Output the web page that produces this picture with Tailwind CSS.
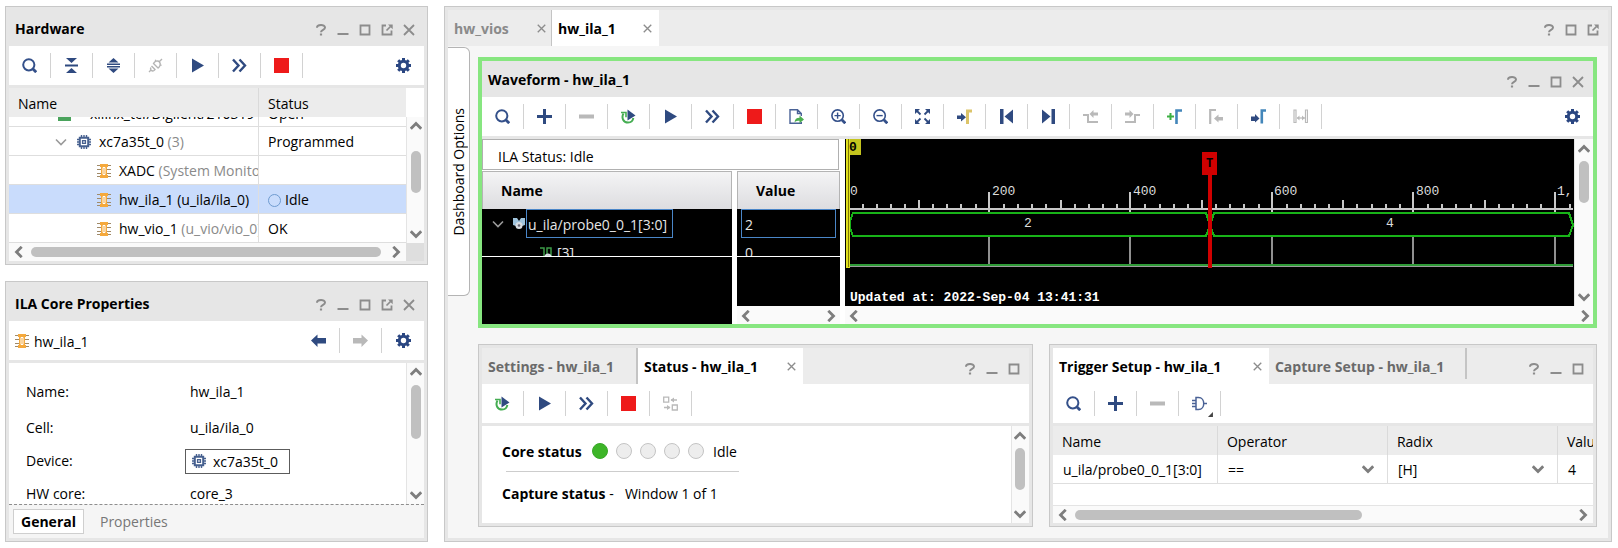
<!DOCTYPE html>
<html lang="en">
<head>
<meta charset="utf-8">
<title>Hardware Manager</title>
<script src="https://cdn.jsdelivr.net/npm/@tailwindcss/browser@4"></script>
</head>
<body class="h-screen min-h-[548px] bg-white font-['Open_Sans','Noto_Sans',sans-serif] text-sm text-black">

<!-- Icon library -->
<svg class="hidden" aria-hidden="true">
  <symbol id="search" viewBox="0 0 15 15"><circle cx="6.8" cy="6.8" r="5.6" fill="none" stroke="#34508a" stroke-width="2"/><path d="M10.5 10.5l3.7 3.7" stroke="#34508a" stroke-width="2.8"/></symbol>
  <symbol id="collapse" viewBox="0 0 15 15"><path d="M2 0h11L7.500 5zM2 15h11L7.500 10zM1 6.500h13v2H1z" fill="#2f4a80"/></symbol>
  <symbol id="expand" viewBox="0 0 15 15"><path d="M2.500 4.500L7.500 0l5 4.500zM2.500 10.500L7.500 15l5-4.500zM1 5.500h13v1.500H1zM1 8h13v1.500H1z" fill="#2f4a80"/></symbol>
  <symbol id="plug" viewBox="0 0 15 15"><path d="M1 14l2.500-2.500M11.500 3.500L14 1M3 9.500c-1.500 2 1 4.500 3 3l1.500-1.500M5.500 5.500l4.500 4.500c2-1 3-4 1.500-6s-5-.8-6 1.500zM3.500 8l3.800 3.800M8 3.500L7.300 1.700M12 6.500l1.500 1" fill="none" stroke="#b4b4b4" stroke-width="1.400"/></symbol>
  <symbol id="play" viewBox="0 0 15 15"><path d="M2 0.500L14 7.500 2 14.500z" fill="#2f4a80"/></symbol>
  <symbol id="ffwd" viewBox="0 0 15 15"><path d="M1 1.500l5.500 6-5.500 6M7.500 1.500l5.500 6-5.500 6" fill="none" stroke="#2f4a80" stroke-width="2.400"/></symbol>
  <symbol id="stop" viewBox="0 0 15 15"><path d="M0 0h15v15H0z" fill="#ee1a1a"/></symbol>
  <symbol id="gear" viewBox="0 0 15 15"><path fill="none" stroke="#2b4782" stroke-width="3" d="M7.500 0v3M7.500 12v3M0 7.500h3M12 7.500h3M2.200 2.200l2.100 2.100M10.700 10.700l2.100 2.100M12.800 2.200l-2.100 2.100M4.300 10.700l-2.100 2.100"/><circle cx="7.500" cy="7.500" r="4.200" fill="none" stroke="#2b4782" stroke-width="3"/></symbol>
  <symbol id="plus" viewBox="0 0 15 15"><path d="M6 0h3v6h6v3H9v6H6V9H0V6h6z" fill="#2f4a80"/></symbol>
  <symbol id="minus" viewBox="0 0 15 15"><path d="M0 5.500h15v4H0z" fill="#b9b9b9"/></symbol>
  <symbol id="rerun" viewBox="0 0 15 15"><path d="M2.500 4.500C0 9 2.500 13.500 7 13.500c3.200 0 5-2 5.300-4.500" fill="none" stroke="#45ad52" stroke-width="2"/><path d="M0 3.500h5v4.700" fill="none" stroke="#45ad52" stroke-width="1.600"/><path d="M6.500 0.500l8 6-8 5z" fill="#2f4a80"/></symbol>
  <symbol id="export" viewBox="0 0 15 15"><path d="M12.300 7V4.500L8.500.7H1v13.500h11.300V13M8.500.7v3.800h3.800" fill="none" stroke="#4a6296" stroke-width="1.400"/><path d="M5.500 13.500c.4-3.500 2-4.800 5-4.800V6.500l4.500 4-4.500 3.800v-2.500c-2.200 0-3.500.3-5 1.700z" fill="#4cae4f"/></symbol>
  <symbol id="zoomin" viewBox="0 0 15 15"><circle cx="6.600" cy="6.600" r="5.700" fill="none" stroke="#34508a" stroke-width="1.600"/><path d="M3.500 6.600h6.200M6.600 3.500v6.200" stroke="#34508a" stroke-width="1.400"/><path d="M10.800 10.800l3.500 3.500" stroke="#34508a" stroke-width="2.800"/></symbol>
  <symbol id="zoomout" viewBox="0 0 15 15"><circle cx="6.600" cy="6.600" r="5.700" fill="none" stroke="#34508a" stroke-width="1.600"/><path d="M3.500 6.600h6.200" stroke="#34508a" stroke-width="1.400"/><path d="M10.800 10.800l3.500 3.500" stroke="#34508a" stroke-width="2.800"/></symbol>
  <symbol id="fit" viewBox="0 0 15 15"><path d="M0 0h5L0 5zM15 0h-5l5 5zM0 15h5l-5-5zM15 15h-5l5-5z" fill="#2f4a80"/><path d="M1.500 1.500l4 4M13.500 1.500l-4 4M1.500 13.500l4-4M13.500 13.500l-4-4" stroke="#2f4a80" stroke-width="1.800"/></symbol>
  <symbol id="gotocursor" viewBox="0 0 15 15"><path d="M10.500 15V2H15" fill="none" stroke="#dcc469" stroke-width="3"/><path d="M0 6.500h4V4l5 4.200-5 4.200V10H0z" fill="#2f4a80"/></symbol>
  <symbol id="first" viewBox="0 0 15 15"><path d="M1 0h3.500v15H1zM14 0.500v14L5.500 7.500z" fill="#2f4a80"/></symbol>
  <symbol id="last" viewBox="0 0 15 15"><path d="M10.500 0H14v15h-3.500zM1 0.500v14l8.500-7z" fill="#2f4a80"/></symbol>
  <symbol id="prevedge" viewBox="0 0 15 15"><path d="M0 6h5v7h10" fill="none" stroke="#b9b9b9" stroke-width="2"/><path d="M6.500 5l4-4v2.500H15v3h-4.500V9z" fill="#b9b9b9"/></symbol>
  <symbol id="nextedge" viewBox="0 0 15 15"><path d="M0 13h10V6h5" fill="none" stroke="#b9b9b9" stroke-width="2"/><path d="M8.500 5l-4-4v2.500H0v3h4.500V9z" fill="#b9b9b9"/></symbol>
  <symbol id="addmark" viewBox="0 0 15 15"><path d="M9.500 15V1.500H15" fill="none" stroke="#4386ba" stroke-width="2.600"/><path d="M0 7.500h7M3.500 4v7" stroke="#3cb043" stroke-width="2"/></symbol>
  <symbol id="prevmark" viewBox="0 0 15 15"><path d="M1.200 15V1H7" fill="none" stroke="#b9b9b9" stroke-width="2.200"/><path d="M5 9.500L9.500 5.500V8H14v3.500H9.500v2z" fill="#b9b9b9"/></symbol>
  <symbol id="nextmark" viewBox="0 0 15 15"><path d="M10.800 14.500V1.500H15" fill="none" stroke="#4386ba" stroke-width="2.600"/><path d="M0 7.500h4V5l4.500 4.500-4.500 4V12H0z" fill="#2f4a80"/></symbol>
  <symbol id="swap" viewBox="0 0 15 15"><path d="M1 1h2v12.500H1zM12.500 1h2v12.500h-2z" fill="none" stroke="#b9b9b9" stroke-width="1.200"/><path d="M4 9h8" stroke="#b9b9b9" stroke-width="1.200"/><path d="M3.800 9l2.700-2.500v5zM11.700 9L9 6.500v5z" fill="#b9b9b9"/></symbol>
  <symbol id="exchange" viewBox="0 0 15 15"><path d="M.7 1.200h5v5h-5zM9.300 9h5v5h-5z" fill="none" stroke="#b9b9b9" stroke-width="1.300"/><path d="M8 4h6M1 11.500h6" stroke="#b9b9b9" stroke-width="1.300"/><path d="M7.500 4L11 1.500v5zM7.500 11.500L4 9v5z" fill="#b9b9b9"/></symbol>
  <symbol id="gate" viewBox="0 0 15 15"><path d="M4 1.500h2.500c7 0 7 12 0 12H4zM0 4.500h4M0 7.500h4M0 10.500h4M11.700 7.500H15" fill="none" stroke="#4a6296" stroke-width="1.500"/></symbol>
  <symbol id="back" viewBox="0 0 15 15"><path d="M0 7.500L6.500 1.500V5H15v5.500H6.500V14z" fill="#2f4a80"/></symbol>
  <symbol id="forward" viewBox="0 0 15 15"><path d="M15 7.500L8.500 1.500V5H0v5.500h8.500V14z" fill="#b9b9b9"/></symbol>
  <symbol id="help" viewBox="0 0 12 12"><path d="M2 3.700C2 .2 10 .2 10 3.600 10 6 6 5.700 6 8.300" fill="none" stroke="#8c8c8c" stroke-width="2"/><path d="M4.900 9.500h2.200v2H4.900z" fill="#8c8c8c"/></symbol>
  <symbol id="min" viewBox="0 0 12 12"><path d="M.5 9h11v2H.5z" fill="#8c8c8c"/></symbol>
  <symbol id="max" viewBox="0 0 12 12"><path d="M1.500 1.500h9v9h-9z" fill="none" stroke="#8c8c8c" stroke-width="1.800"/></symbol>
  <symbol id="pop" viewBox="0 0 12 12"><path d="M5 1.500H1.500v9h9V6.500" fill="none" stroke="#8c8c8c" stroke-width="1.800"/><path d="M5.500 6.500L9.500 2.500" stroke="#8c8c8c" stroke-width="1.700"/><path d="M7 .5h4.700v4.700z" fill="#8c8c8c"/></symbol>
  <symbol id="close" viewBox="0 0 12 12"><path d="M1 1l10 10M11 1L1 11" stroke="#8c8c8c" stroke-width="1.800"/></symbol>
  <symbol id="up" viewBox="0 0 12 12"><path d="M.8 8.700L6 3.500l5.200 5.200" fill="none" stroke="#7d7d7d" stroke-width="2.800"/></symbol>
  <symbol id="down" viewBox="0 0 12 12"><path d="M.8 3.300L6 8.500l5.200-5.200" fill="none" stroke="#7d7d7d" stroke-width="2.800"/></symbol>
  <symbol id="left" viewBox="0 0 12 12"><path d="M8.700.8L3.500 6l5.200 5.200" fill="none" stroke="#7d7d7d" stroke-width="2.800"/></symbol>
  <symbol id="right" viewBox="0 0 12 12"><path d="M3.300.8L8.500 6l-5.200 5.200" fill="none" stroke="#7d7d7d" stroke-width="2.800"/></symbol>
  <symbol id="twist" viewBox="0 0 12 12"><path d="M1 3.500l5 5 5-5" fill="none" stroke="#9a9a9a" stroke-width="1.600"/></symbol>
  <symbol id="chip" viewBox="0 0 14 14"><path d="M2.800 2.800h8.400v8.400H2.800z" fill="none" stroke="#46608f" stroke-width="2"/><path d="M5.600 5.600h2.800v2.800H5.600z" fill="none" stroke="#46608f" stroke-width="1.400"/><path d="M4.500 0v2M7 0v2M9.500 0v2M4.500 12v2M7 12v2M9.500 12v2M0 4.500h2M0 7h2M0 9.500h2M12 4.500h2M12 7h2M12 9.500h2" stroke="#46608f" stroke-width="1.400"/></symbol>
  <symbol id="core" viewBox="0 0 14 14"><path d="M0 1.500h14M0 5.500h14M0 9.500h14M0 12.500h14" stroke="#a08a68" stroke-width="1"/><path d="M3 0h8v3h-1v8h1v3H3v-3h1V3H3z" fill="#f5a93c"/><path d="M6 3.500h2v7H6z" fill="none" stroke="#fff" stroke-width="1"/></symbol>
  <symbol id="bus" viewBox="0 0 14 14"><path d="M1 1h4l2 3 2-3h4v7l-3 1H4L1 8z" fill="#9fc3dc"/><circle cx="7" cy="8.500" r="3.500" fill="#d8dde2"/><circle cx="7" cy="8.500" r="1.300" fill="#667"/></symbol>
  <symbol id="bit" viewBox="0 0 14 14"><path d="M0 2h4v12M7 14V2h4v12" fill="none" stroke="#3c9a48" stroke-width="1.500"/><circle cx="8" cy="11" r="3.500" fill="#d8dde2"/><circle cx="8" cy="11" r="1.200" fill="#667"/></symbol>
</svg>

<div class="flex h-full gap-4 pt-[6px] pr-[6px] pb-[6px] pl-[5px]">

  <!-- Left column -->
  <div class="flex w-[423px] shrink-0 flex-col gap-4">

    <section class="flex flex-col border border-[#c8c8c8] bg-[#e6e6e6] p-[3px]">
      <header class="flex h-9 items-center justify-between pl-[6px]">
        <h2 class="pt-[2px] font-bold">Hardware</h2>
        <div class="flex pt-1 pr-1 [&>button]:flex [&>button]:w-[22px] [&>button]:justify-center [&_svg]:size-3">
          <button aria-label="Help"><svg><use href="#help"/></svg></button>
          <button aria-label="Minimize"><svg><use href="#min"/></svg></button>
          <button aria-label="Maximize"><svg><use href="#max"/></svg></button>
          <button aria-label="Float"><svg><use href="#pop"/></svg></button>
          <button aria-label="Close"><svg><use href="#close"/></svg></button>
        </div>
      </header>
      <div class="flex h-[39px] items-center bg-white [&>button]:flex [&>button]:h-[25px] [&>button]:w-[42px] [&>button]:items-center [&>button]:justify-center [&>button]:border-r [&>button]:border-[#d2d2d2] [&_svg]:size-[15px]">
        <button aria-label="Search"><svg><use href="#search"/></svg></button>
        <button aria-label="Collapse all"><svg><use href="#collapse"/></svg></button>
        <button aria-label="Expand all"><svg><use href="#expand"/></svg></button>
        <button aria-label="Auto connect"><svg><use href="#plug"/></svg></button>
        <button aria-label="Run trigger"><svg><use href="#play"/></svg></button>
        <button aria-label="Run trigger immediate"><svg><use href="#ffwd"/></svg></button>
        <button aria-label="Stop trigger"><svg><use href="#stop"/></svg></button>
        <button aria-label="Settings" class="ml-auto border-r-0!"><svg><use href="#gear"/></svg></button>
      </div>
      <div class="mt-[3px] flex bg-white">
        <div class="min-w-0 flex-1">
          <table class="w-full table-fixed border-separate border-spacing-0 leading-[26px] [&_td]:border-b [&_td]:border-[#dedede] [&_td]:p-0 [&_td]:pt-[2px]">
            <colgroup><col class="w-[250px]"><col></colgroup>
            <thead><tr class="h-[29px] bg-[#ececec] text-left">
              <th class="border-r border-[#dadada] p-0 pt-[2px] pl-[9px] font-normal">Name</th><th class="p-0 pt-[2px] pl-[9px] font-normal">Status</th>
            </tr></thead>
            <tbody class="whitespace-nowrap">
              <tr class="leading-6">
                <td class="border-r pt-0!"><div class="flex h-[9px] items-end overflow-hidden pl-[49px]"><div class="flex items-center gap-[19px]"><span class="size-[13px] bg-[#4aa35c]"></span>xilinx_tcf/Digilent/210319</div></div></td>
                <td class="pt-0!"><div class="flex h-[9px] items-end overflow-hidden pl-[9px]">Open</div></td>
              </tr>
              <tr class="h-[29px]">
                <td class="border-r"><div class="flex items-center overflow-hidden pl-[46px]"><svg class="mr-[10px] size-3"><use href="#twist"/></svg><svg class="mr-[8px] size-[14px]"><use href="#chip"/></svg>xc7a35t_0&nbsp;<span class="text-[#8a8a8a]">(3)</span></div></td>
                <td class="pl-[9px]!">Programmed</td>
              </tr>
              <tr class="h-[29px]">
                <td class="border-r"><div class="flex items-center overflow-hidden pl-[88px]"><svg class="mr-2 size-[14px] shrink-0"><use href="#core"/></svg>XADC&nbsp;<span class="text-[#8a8a8a]">(System Monitor)</span></div></td>
                <td></td>
              </tr>
              <tr class="h-[29px] bg-[#c9dcfc]">
                <td class="border-r"><div class="flex items-center overflow-hidden pl-[88px]"><svg class="mr-2 size-[14px] shrink-0"><use href="#core"/></svg>hw_ila_1 (u_ila/ila_0)</div></td>
                <td class="pl-[9px]!"><span class="mr-1 inline-block size-[13px] rounded-full border border-[#6f9bd0] align-[-2px]"></span>Idle</td>
              </tr>
              <tr class="h-[29px]">
                <td class="border-r"><div class="flex items-center overflow-hidden pl-[88px]"><svg class="mr-2 size-[14px] shrink-0"><use href="#core"/></svg>hw_vio_1&nbsp;<span class="text-[#8a8a8a]">(u_vio/vio_0)</span></div></td>
                <td class="pl-[9px]!">OK</td>
              </tr>
            </tbody>
          </table>
          <div class="flex h-[18px] items-center bg-[#fafafa] px-1">
            <svg class="size-3"><use href="#left"/></svg>
            <div class="mx-[6px] h-[10px] w-[350px] rounded-full bg-[#c0c0c0]"></div>
            <svg class="ml-auto size-3"><use href="#right"/></svg>
          </div>
        </div>
        <div class="flex w-[18px] flex-col pt-[29px]">
          <div class="flex flex-1 flex-col items-center border-l border-[#e4e4e4] bg-[#fafafa] py-[3px]">
            <svg class="size-3"><use href="#up"/></svg>
            <div class="mt-[19px] h-[42px] w-[10px] rounded-full bg-[#c0c0c0]"></div>
            <svg class="mt-auto size-3"><use href="#down"/></svg>
          </div>
          <div class="h-[18px] bg-[#dedede]"></div>
        </div>
      </div>
    </section>

    <section class="flex min-h-0 flex-1 flex-col border border-[#c8c8c8] bg-[#e6e6e6] p-[3px]">
      <header class="flex h-9 shrink-0 items-center justify-between pl-[6px]">
        <h2 class="pt-[2px] font-bold">ILA Core Properties</h2>
        <div class="flex pt-1 pr-1 [&>button]:flex [&>button]:w-[22px] [&>button]:justify-center [&_svg]:size-3">
          <button aria-label="Help"><svg><use href="#help"/></svg></button>
          <button aria-label="Minimize"><svg><use href="#min"/></svg></button>
          <button aria-label="Maximize"><svg><use href="#max"/></svg></button>
          <button aria-label="Float"><svg><use href="#pop"/></svg></button>
          <button aria-label="Close"><svg><use href="#close"/></svg></button>
        </div>
      </header>
      <div class="flex h-[39px] shrink-0 items-center bg-white pl-[6px] [&>button]:flex [&>button]:h-[25px] [&>button]:w-[42px] [&>button]:items-center [&>button]:justify-center [&>button]:border-r [&>button]:border-[#d2d2d2]">
        <svg class="mr-[5px] size-[14px]"><use href="#core"/></svg>
        <span class="pt-[2px]">hw_ila_1</span>
        <button aria-label="Back" class="ml-auto"><svg class="size-[15px]"><use href="#back"/></svg></button>
        <button aria-label="Forward"><svg class="size-[15px]"><use href="#forward"/></svg></button>
        <button aria-label="Settings" class="border-r-0!"><svg class="size-[15px]"><use href="#gear"/></svg></button>
      </div>
      <div class="mt-[3px] flex min-h-0 flex-1 bg-white">
        <dl class="min-w-0 flex-1 overflow-hidden pt-[10px] pl-[17px] [&>div]:grid [&>div]:grid-cols-[164px_1fr] [&>div]:items-center">
          <div class="h-[37px]"><dt>Name:</dt><dd>hw_ila_1</dd></div>
          <div class="h-[35px]"><dt>Cell:</dt><dd>u_ila/ila_0</dd></div>
          <div class="h-8"><dt>Device:</dt><dd><button class="-ml-[5px] flex h-[25px] w-[105px] items-center gap-[7px] border border-[#5c5c5c] pl-[6px]"><svg class="size-[14px]"><use href="#chip"/></svg><span class="pt-px">xc7a35t_0</span></button></dd></div>
          <div class="h-[34px]"><dt>HW core:</dt><dd>core_3</dd></div>
        </dl>
        <div class="flex w-[18px] flex-col items-center border-l border-[#e4e4e4] bg-[#fafafa] py-[3px]">
          <svg class="size-3"><use href="#up"/></svg>
          <div class="mt-[7px] h-[54px] w-[10px] rounded-full bg-[#c0c0c0]"></div>
          <svg class="mt-auto size-3"><use href="#down"/></svg>
        </div>
      </div>
      <div role="tablist" class="flex h-[34px] shrink-0 items-center gap-4 border-t border-dashed border-[#8e8e8e] bg-[#f5f5f5] pl-1">
        <button role="tab" aria-selected="true" class="h-[25px] border border-[#cfcfcf] bg-white px-[7px] pt-px font-bold">General</button>
        <button role="tab" class="pt-px text-[#777]">Properties</button>
      </div>
    </section>
  </div>

  <!-- Dashboard -->
  <main class="flex min-w-0 flex-1 flex-col border border-[#c8c8c8] bg-[#e6e6e6] p-[3px]">
    <header class="flex h-9 shrink-0 justify-between bg-[#ececec]">
      <div role="tablist" class="flex font-bold [&_[role=tab]]:pt-[2px] [&>div]:flex [&>div]:items-center [&>div]:justify-between">
        <div class="w-[104px] border-r border-[#c4c4c4] pr-[5px] pl-[6px]"><button role="tab" class="text-[#8a8a8a]">hw_vios</button><button aria-label="Close hw_vios"><svg class="size-[9px]"><use href="#close"/></svg></button></div>
        <div class="w-[107px] bg-white pr-[7px] pl-[6px]"><button role="tab" aria-selected="true">hw_ila_1</button><button aria-label="Close hw_ila_1"><svg class="size-[9px]"><use href="#close"/></svg></button></div>
      </div>
      <div class="flex items-center pt-1 pr-1 [&>button]:flex [&>button]:w-[22px] [&>button]:justify-center [&_svg]:size-3">
        <button aria-label="Help"><svg><use href="#help"/></svg></button>
        <button aria-label="Maximize"><svg><use href="#max"/></svg></button>
        <button aria-label="Float"><svg><use href="#pop"/></svg></button>
      </div>
    </header>

    <div class="flex min-h-0 flex-1 items-start bg-[#f6f6f6]">
      <button class="mt-px flex h-[249px] w-[22px] shrink-0 items-center justify-center rounded-r-md border border-l-0 border-[#b4b4b4] bg-white"><span class="rotate-180 whitespace-nowrap [writing-mode:vertical-rl]">Dashboard Options</span></button>

      <div class="flex h-full min-w-0 flex-1 flex-col gap-4 py-[11px] pr-[11px] pl-2">

        <section class="shrink-0 border-4 border-[#87e680] bg-[#e6e6e6]">
          <header class="flex h-9 items-center justify-between pl-[6px]">
            <h2 class="pt-[2px] font-bold">Waveform - hw_ila_1</h2>
            <div class="flex pt-[5px] pr-1 [&>button]:flex [&>button]:w-[22px] [&>button]:justify-center [&_svg]:size-3">
              <button aria-label="Help"><svg><use href="#help"/></svg></button>
              <button aria-label="Minimize"><svg><use href="#min"/></svg></button>
              <button aria-label="Maximize"><svg><use href="#max"/></svg></button>
              <button aria-label="Close"><svg><use href="#close"/></svg></button>
            </div>
          </header>
          <div class="flex h-[39px] items-center bg-white [&>button]:flex [&>button]:h-[25px] [&>button]:w-[42px] [&>button]:items-center [&>button]:justify-center [&>button]:border-r [&>button]:border-[#d2d2d2] [&_svg]:size-[15px]">
            <button aria-label="Search"><svg><use href="#search"/></svg></button>
            <button aria-label="Add probe"><svg><use href="#plus"/></svg></button>
            <button aria-label="Remove probe"><svg><use href="#minus"/></svg></button>
            <button aria-label="Auto re-trigger"><svg><use href="#rerun"/></svg></button>
            <button aria-label="Run trigger"><svg><use href="#play"/></svg></button>
            <button aria-label="Run trigger immediate"><svg><use href="#ffwd"/></svg></button>
            <button aria-label="Stop trigger"><svg><use href="#stop"/></svg></button>
            <button aria-label="Export data"><svg><use href="#export"/></svg></button>
            <button aria-label="Zoom in"><svg><use href="#zoomin"/></svg></button>
            <button aria-label="Zoom out"><svg><use href="#zoomout"/></svg></button>
            <button aria-label="Zoom fit"><svg><use href="#fit"/></svg></button>
            <button aria-label="Go to cursor"><svg><use href="#gotocursor"/></svg></button>
            <button aria-label="Go to start"><svg><use href="#first"/></svg></button>
            <button aria-label="Go to end"><svg><use href="#last"/></svg></button>
            <button aria-label="Previous transition"><svg><use href="#prevedge"/></svg></button>
            <button aria-label="Next transition"><svg><use href="#nextedge"/></svg></button>
            <button aria-label="Add marker"><svg><use href="#addmark"/></svg></button>
            <button aria-label="Previous marker"><svg><use href="#prevmark"/></svg></button>
            <button aria-label="Next marker"><svg><use href="#nextmark"/></svg></button>
            <button aria-label="Swap cursors"><svg><use href="#swap"/></svg></button>
            <button aria-label="Settings" class="ml-auto border-r-0!"><svg><use href="#gear"/></svg></button>
          </div>

          <div class="mt-[3px] flex h-[185px] gap-[5px] bg-white">
            <div class="flex w-[358px] shrink-0 flex-col gap-px">
              <div class="mr-px flex h-[31px] items-center border border-[#b0b0b0] pt-[5px] pl-[15px]">ILA Status: Idle</div>
              <div class="flex flex-1 gap-[5px]">
                <div class="flex w-[250px] flex-col">
                  <div class="flex h-[38px] items-center border border-b-0 border-[#b4b4b4] bg-linear-to-b from-[#f4f4f5] to-[#dddde0] pl-[18px] font-bold">Name</div>
                  <div class="h-12 overflow-hidden border-b border-white bg-black text-[#e6e6e6]">
                    <div class="flex h-[29px] items-center pl-[10px]"><svg class="mr-2 size-3"><use href="#twist"/></svg><svg class="size-[14px]"><use href="#bus"/></svg><span class="flex h-[29px] w-[147px] items-center border border-[#4a86c8] pt-[2px] pl-px">u_ila/probe0_0_1[3:0]</span></div>
                    <div class="flex h-[29px] items-center gap-[3px] pl-[58px]"><svg class="size-[14px]"><use href="#bit"/></svg>[3]</div>
                  </div>
                  <div class="flex-1 bg-black"></div>
                </div>
                <div class="flex flex-1 flex-col">
                  <div class="flex h-[38px] items-center border border-b-0 border-[#b4b4b4] bg-linear-to-b from-[#f4f4f5] to-[#dddde0] pl-[18px] font-bold">Value</div>
                  <div class="h-12 overflow-hidden border-b border-white bg-black px-1 text-[#e6e6e6]">
                    <div class="flex h-[29px] items-center border border-[#4a86c8] pt-[2px] pl-[3px]">2</div>
                    <div class="flex h-[29px] items-center pl-1">0</div>
                  </div>
                  <div class="flex-1 bg-black"></div>
                  <div class="flex h-[18px] items-center justify-between bg-[#fafafa] px-[3px] pt-[2px]"><svg class="size-3"><use href="#left"/></svg><svg class="size-3"><use href="#right"/></svg></div>
                </div>
              </div>
            </div>

            <div class="flex min-w-0 flex-1 flex-col">
              <div class="flex h-[167px]">
                <div class="min-w-0 flex-1 overflow-hidden bg-black">
                  <svg width="729" height="167" class="font-['Liberation_Mono',monospace] text-[13px]" shape-rendering="crispEdges">
                    <g fill="#c8c8c8">
                      <path d="M5 69h723v2H5z"/>
                      <path d="M17 65h2v4h-2zM31 65h2v4h-2zM45 65h2v4h-2zM59 65h2v4h-2zM73 61h2v8h-2zM87 65h2v4h-2zM101 65h2v4h-2zM115 65h2v4h-2zM130 65h2v4h-2zM143 53h2v20h-2z"/>
                      <path d="M158 65h2v4h-2zM172 65h2v4h-2zM186 65h2v4h-2zM200 65h2v4h-2zM215 61h2v8h-2zM229 65h2v4h-2zM243 65h2v4h-2zM257 65h2v4h-2zM271 65h2v4h-2zM284 53h2v20h-2z"/>
                      <path d="M299 65h2v4h-2zM314 65h2v4h-2zM328 65h2v4h-2zM342 65h2v4h-2zM356 61h2v8h-2zM370 65h2v4h-2zM384 65h2v4h-2zM398 65h2v4h-2zM413 65h2v4h-2zM426 53h2v20h-2z"/>
                      <path d="M441 65h2v4h-2zM455 65h2v4h-2zM469 65h2v4h-2zM483 65h2v4h-2zM497 61h2v8h-2zM511 65h2v4h-2zM526 65h2v4h-2zM540 65h2v4h-2zM554 65h2v4h-2zM567 53h2v20h-2z"/>
                      <path d="M582 65h2v4h-2zM596 65h2v4h-2zM610 65h2v4h-2zM625 65h2v4h-2zM639 61h2v8h-2zM653 65h2v4h-2zM667 65h2v4h-2zM681 65h2v4h-2zM695 65h2v4h-2zM709 53h2v20h-2zM724 65h2v4h-2z"/>
                      <path d="M143 98h2v27h-2zM284 98h2v27h-2zM426 98h2v27h-2zM567 98h2v27h-2zM709 98h2v27h-2z" fill="#909090"/>
                    </g>
                    <path d="M5 127.500h723" stroke="#9c9c9c"/>
                    <path d="M5 126h723" stroke="#2f9c38" stroke-width="2"/>
                    <path d="M5 89V82l3-8h353l4 12 4-12h355l4 12-4 11H369l-4-11-4 11H8l-3-8z" fill="none" stroke="#18b318" stroke-width="2"/>
                    <g fill="#dcdcdc">
                      <text x="5" y="56">0</text><text x="147" y="56">200</text><text x="288" y="56">400</text><text x="429" y="56">600</text><text x="571" y="56">800</text><text x="712" y="56">1,</text>
                      <text x="179" y="88">2</text><text x="541" y="88">4</text>
                    </g>
                    <path d="M3 0h13v16H3z" fill="#c4c41e"/>
                    <path d="M1 0h4v129H1z" fill="#e0e020"/><path d="M3 0h1v128H3z" fill="#807800"/>
                    <text x="4" y="12" fill="#000" font-weight="bold">0</text>
                    <path d="M357 13h15v23h-15zM363 36h4v93h-4z" fill="#d00000"/>
                    <text x="361" y="28" fill="#000" font-weight="bold" class="text-[12px]">T</text>
                    <text x="5" y="162" fill="#fff" font-weight="bold">Updated at: 2022-Sep-04 13:41:31</text>
                  </svg>
                </div>
                <div class="flex w-[19px] shrink-0 flex-col items-center border-l border-[#e4e4e4] bg-[#fafafa] pt-1 pb-[3px]">
                  <svg class="size-3"><use href="#up"/></svg>
                  <div class="mt-[6px] h-[42px] w-[10px] rounded-full bg-[#c0c0c0]"></div>
                  <svg class="mt-auto size-3"><use href="#down"/></svg>
                </div>
              </div>
              <div class="flex h-[18px] items-center justify-between bg-[#fafafa] pt-[2px] pr-[2px] pl-[3px]"><svg class="size-3"><use href="#left"/></svg><svg class="size-3"><use href="#right"/></svg></div>
            </div>
          </div>
        </section>

        <div class="flex min-h-0 flex-1 gap-4">

          <section class="flex min-w-0 flex-[555] flex-col border border-[#c8c8c8] bg-[#e6e6e6] p-[3px]">
            <header class="flex h-9 shrink-0 justify-between bg-[#ececec]">
              <div role="tablist" class="flex font-bold [&_[role=tab]]:pt-[2px] [&>div]:flex [&>div]:items-center [&>div]:justify-between">
                <div class="w-[156px] border-r-2 border-[#c4c4c4] pl-[6px]"><button role="tab" class="text-[#6a6a6a]">Settings - hw_ila_1</button></div>
                <div class="w-[165px] bg-white pr-[7px] pl-[6px]"><button role="tab" aria-selected="true">Status - hw_ila_1</button><button aria-label="Close Status"><svg class="size-[9px]"><use href="#close"/></svg></button></div>
              </div>
              <div class="flex items-center pt-[6px] pr-1 [&>button]:flex [&>button]:w-[22px] [&>button]:justify-center [&_svg]:size-3">
                <button aria-label="Help"><svg><use href="#help"/></svg></button>
                <button aria-label="Minimize"><svg><use href="#min"/></svg></button>
                <button aria-label="Maximize"><svg><use href="#max"/></svg></button>
              </div>
            </header>
            <div class="flex h-[39px] shrink-0 items-center bg-white [&>button]:flex [&>button]:h-[25px] [&>button]:w-[42px] [&>button]:items-center [&>button]:justify-center [&>button]:border-r [&>button]:border-[#d2d2d2] [&_svg]:size-[15px]">
              <button aria-label="Auto re-trigger"><svg><use href="#rerun"/></svg></button>
              <button aria-label="Run trigger"><svg><use href="#play"/></svg></button>
              <button aria-label="Run trigger immediate"><svg><use href="#ffwd"/></svg></button>
              <button aria-label="Stop trigger"><svg><use href="#stop"/></svg></button>
              <button aria-label="Toggle layout"><svg><use href="#exchange"/></svg></button>
            </div>
            <div class="mt-[3px] flex min-h-0 flex-1 bg-white">
              <div class="min-w-0 flex-1 pt-[10px] pl-5">
                <div class="flex h-8 w-[237px] items-center">
                  <span class="w-[90px] font-bold">Core status</span>
                  <span class="mb-[3px] flex gap-2 [&>i]:size-4 [&>i]:rounded-full [&>i]:border [&>i]:border-[#c4c4c4] [&>i]:bg-[#ededed]"><i class="border-[#38a828]! bg-[#3db528]!"></i><i></i><i></i><i></i><i></i></span>
                  <span class="ml-[9px]">Idle</span>
                </div>
                <hr class="mt-[3px] ml-1 w-[233px] border-[#cdcdcd]">
                <div class="flex h-11 items-center"><span class="font-bold">Capture status</span>&nbsp;- &nbsp;<span class="ml-1">Window 1 of 1</span></div>
              </div>
              <div class="flex w-[18px] flex-col items-center border-l border-[#e4e4e4] bg-[#fafafa] pt-1 pb-[3px]">
                <svg class="size-3"><use href="#up"/></svg>
                <div class="mt-[6px] h-[42px] w-[10px] rounded-full bg-[#c0c0c0]"></div>
                <svg class="mt-auto size-3"><use href="#down"/></svg>
              </div>
            </div>
          </section>

          <section class="flex min-w-0 flex-[548] flex-col border border-[#c8c8c8] bg-[#e6e6e6] p-[3px]">
            <header class="flex h-9 shrink-0 justify-between bg-[#ececec]">
              <div role="tablist" class="flex font-bold [&_[role=tab]]:pt-[2px] [&>div]:flex [&>div]:items-center [&>div]:justify-between">
                <div class="w-[216px] bg-white pr-[7px] pl-[6px]"><button role="tab" aria-selected="true">Trigger Setup - hw_ila_1</button><button aria-label="Close Trigger Setup"><svg class="size-[9px]"><use href="#close"/></svg></button></div>
                <div class="mb-[5px] w-[198px] border-r-2 border-[#c4c4c4] pt-[5px] pl-[6px]"><button role="tab" class="text-[#6a6a6a]">Capture Setup - hw_ila_1</button></div>
              </div>
              <div class="flex items-center pt-[6px] pr-1 [&>button]:flex [&>button]:w-[22px] [&>button]:justify-center [&_svg]:size-3">
                <button aria-label="Help"><svg><use href="#help"/></svg></button>
                <button aria-label="Minimize"><svg><use href="#min"/></svg></button>
                <button aria-label="Maximize"><svg><use href="#max"/></svg></button>
              </div>
            </header>
            <div class="flex h-[39px] shrink-0 items-center bg-white [&>button]:flex [&>button]:h-[25px] [&>button]:w-[42px] [&>button]:items-center [&>button]:justify-center [&>button]:border-r [&>button]:border-[#d2d2d2] [&_svg]:size-[15px]">
              <button aria-label="Search"><svg><use href="#search"/></svg></button>
              <button aria-label="Add probe"><svg><use href="#plus"/></svg></button>
              <button aria-label="Remove probe"><svg><use href="#minus"/></svg></button>
              <button aria-label="Trigger condition" class="relative"><svg><use href="#gate"/></svg><span class="absolute right-[7px] -bottom-px size-[5px] bg-[#444] [clip-path:polygon(100%_0,100%_100%,0_100%)]"></span></button>
            </div>
            <div class="mt-[3px] flex min-h-0 flex-1 flex-col overflow-hidden bg-white">
              <table class="w-full min-w-[680px] table-fixed border-separate border-spacing-0 text-left leading-[26px] [&_td]:relative [&_td]:border-r [&_td]:border-b [&_td]:border-[#dedede] [&_td]:p-0 [&_td]:pt-[2px] [&_th]:border-r [&_th]:border-[#dadada] [&_th]:p-0 [&_th]:pt-[2px] [&_th]:pl-[9px] [&_th]:font-normal">
                <colgroup><col class="w-[165px]"><col class="w-[170px]"><col class="w-[170px]"><col></colgroup>
                <thead><tr class="h-[29px] bg-[#ececec]"><th>Name</th><th>Operator</th><th>Radix</th><th>Value</th></tr></thead>
                <tbody><tr class="h-[29px]">
                  <td><span class="pl-[10px]">u_ila/probe0_0_1[3:0]</span></td>
                  <td><select aria-label="Operator" class="block w-full appearance-none pl-[10px]"><option>==</option><option>!=</option></select><svg class="pointer-events-none absolute top-2 right-[13px] size-3"><use href="#down"/></svg></td>
                  <td><select aria-label="Radix" class="block w-full appearance-none pl-[10px]"><option>[H]</option><option>[B]</option></select><svg class="pointer-events-none absolute top-2 right-[13px] size-3"><use href="#down"/></svg></td>
                  <td><span class="pl-[10px]">4</span></td>
                </tr></tbody>
              </table>
              <div class="mt-auto flex h-[18px] shrink-0 items-center border-t border-[#e4e4e4] bg-[#fafafa] px-1">
                <svg class="size-3"><use href="#left"/></svg>
                <div class="mx-[6px] h-[10px] w-[287px] rounded-full bg-[#c0c0c0]"></div>
                <svg class="ml-auto size-3"><use href="#right"/></svg>
              </div>
            </div>
          </section>
        </div>
      </div>
    </div>
  </main>
</div>
</body>
</html>
